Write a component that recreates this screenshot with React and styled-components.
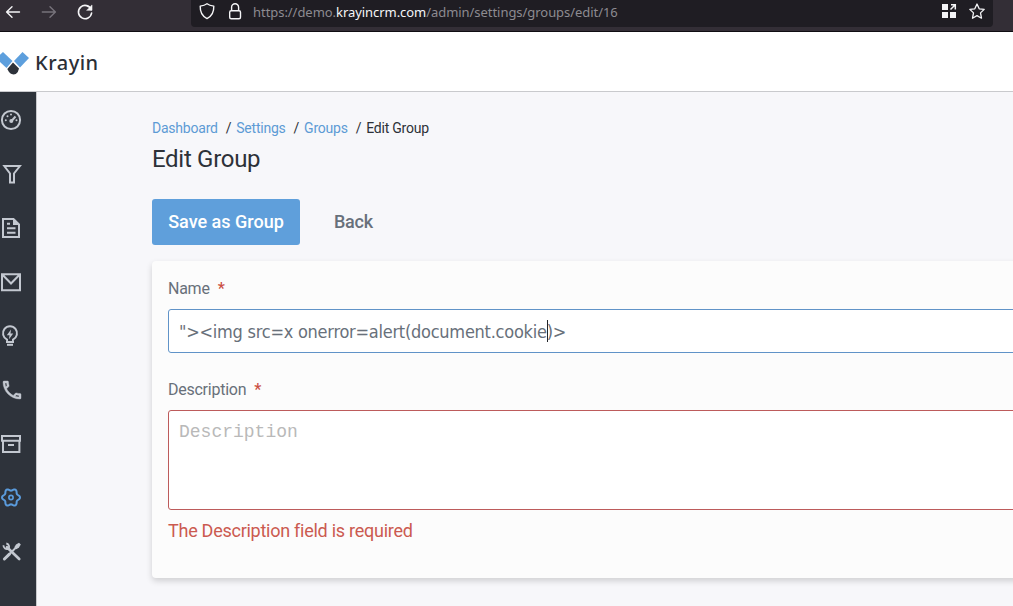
import React from "react";
import styled, { createGlobalStyle } from "styled-components";

const Global = createGlobalStyle`
  * { box-sizing: border-box; }
  html, body { margin: 0; height: 100%; overflow: hidden; }
  body { font-family: Roboto, "Liberation Sans", sans-serif; background: #f7f7fa; color: #2d3138; }
`;

const Page = styled.div`
  display: flex;
  flex-direction: column;
  width: 100%;
  height: 100vh;
  overflow: hidden;
`;

const BrowserBar = styled.div`
  display: flex;
  flex: none;
  height: 32px;
  background: #332e36;
  border-bottom: 1px solid #0f0d12;
`;

const NavButtons = styled.div`
  width: 191px;
  flex: none;
  svg { display: block; }
`;

const AddressBar = styled.div`
  display: flex;
  align-items: center;
  width: 802px;
  height: 27px;
  background: #1f1d23;
  border-radius: 0 0 4px 4px;
  svg { display: block; flex: none; }
`;

const Url = styled.div`
  flex: 1;
  height: 25px;
  line-height: 25px;
  margin-bottom: 2px;
  font-family: "Noto Sans", sans-serif;
  font-size: 13px;
  letter-spacing: -0.05px;
  white-space: nowrap;
  color: #8d8b91;
  b { font-weight: 400; color: #f6f6f8; }
`;

const Header = styled.header`
  display: flex;
  flex: none;
  align-items: center;
  height: 60px;
  background: #fff;
  border-bottom: 1px solid #c9cacd;
  svg { display: block; flex: none; }
`;

const Brand = styled.span`
  font-family: "Noto Sans", sans-serif;
  font-size: 20px;
  font-weight: 500;
  line-height: 28px;
  letter-spacing: 0.5px;
  margin-top: 2px;
  margin-left: 5px;
  color: #2b2f36;
`;

const Body = styled.div`
  display: flex;
  flex: 1;
  min-height: 0;
`;

const Sidebar = styled.nav`
  flex: none;
  width: 37px;
  padding-top: 1px;
  background: #2e333b;
  border-right: 1px solid #c9cacd;
`;

const MenuItem = styled.div`
  height: 54px;
  color: ${(p) => (p.$active ? "#5a9bdc" : "#c3c8d0")};
  svg { display: block; }
`;

const Content = styled.main`
  flex: 1;
  min-width: 0;
  padding: 27px 0 0 115px;
`;

const Crumbs = styled.div`
  display: flex;
  height: 18px;
  font-size: 14px;
  line-height: 18px;
  letter-spacing: -0.22px;
  white-space: pre;
`;

const Crumb = styled.span`
  color: ${(p) => (p.$current ? "#2d3138" : "#5d9bd5")};
`;

const Slash = styled.span`
  width: 18.5px;
  padding-left: 8px;
`;

const Title = styled.h1`
  margin: 8px 0 0;
  height: 28px;
  line-height: 28px;
  font-size: 24px;
  font-weight: 400;
  letter-spacing: -0.3px;
`;

const Actions = styled.div`
  display: flex;
  align-items: center;
  gap: 34px;
  margin-top: 26px;
`;

const SaveButton = styled.button`
  width: 148px;
  height: 46px;
  padding: 0 0 2px;
  border: 0;
  border-radius: 3px;
  background: #5f9fdb;
  color: #fff;
  font: 500 18px Roboto, sans-serif;
`;

const BackLink = styled.span`
  padding-bottom: 2px;
  font-size: 18px;
  font-weight: 500;
  letter-spacing: -0.25px;
  color: #68707a;
`;

const Card = styled.section`
  width: 1000px;
  height: 317px;
  margin-top: 16px;
  padding: 17px 16px 16px;
  background: #fcfcfc;
  border-radius: 4px;
  box-shadow: 0 3px 6px rgba(0, 0, 0, 0.16);
`;

const Label = styled.label`
  display: flex;
  gap: 8px;
  height: 22px;
  margin-bottom: 9px;
  line-height: 22px;
  font-size: 16px;
  letter-spacing: -0.25px;
  color: #68707a;
  i { font-style: normal; font-weight: 500; color: #cb4f44; }
`;

const field = (p) => `
  padding: 0 10px;
  background: #fff;
  border: 1px solid ${p.$invalid ? "#bd5b5b" : "#6093c8"};
  border-radius: 3px;
`;

const TextField = styled.div`
  ${field}
  display: flex;
  align-items: center;
  height: 44px;
  margin-bottom: 26px;
  font-family: "DejaVu Sans Condensed", "DejaVu Sans", sans-serif;
  font-stretch: condensed;
  font-size: 18px;
  letter-spacing: -0.25px;
  white-space: pre;
  color: #68707a;
`;

const Caret = styled.span`
  width: 1px;
  height: 22px;
  margin-right: -1px;
  background: #22252a;
`;

const TextArea = styled.div`
  ${field}
  height: 100px;
  padding-top: 10px;
  font-family: "Liberation Mono", monospace;
  font-size: 18px;
  line-height: 22px;
  color: #b9b9b9;
`;

const ErrorText = styled.div`
  margin-top: 10px;
  font-size: 18px;
  line-height: 22px;
  letter-spacing: -0.26px;
  color: #cb5a50;
`;

const gearPath =
  Array.from({ length: 72 }, (_, i) => {
    const a = (i * Math.PI) / 36;
    const r = 7.9 + 1.1 * Math.cos(6 * a);
    return `${i ? "L" : "M"}${(11 + r * Math.cos(a)).toFixed(2)} ${(26.5 + r * Math.sin(a)).toFixed(2)}`;
  }).join("") + "Z";

const icons = [
  <>
    <circle cx="11" cy="27" r="9.1" />
    <path d="M11.5 28L15.5 23.5" />
    <g fill="currentColor" stroke="none">
      <circle cx="11.3" cy="28" r="2" />
      <circle cx="5.8" cy="27.3" r="1" />
      <circle cx="7.5" cy="23.3" r="1" />
      <circle cx="11" cy="21.4" r="1" />
      <circle cx="16.5" cy="27.3" r="1" />
    </g>
  </>,
  <path d="M4.3 19H19.9L14 26.5V35.4H10V26.5Z" />,
  <>
    <path d="M3 18H13.5L19 23.5V36H3Z M7 22.8H10 M7 27.3H15.5 M7 31.7H15.5" />
    <path d="M13 18V24H19Z" fill="currentColor" stroke="none" />
  </>,
  <path d="M2 19.2H20V35.2H2Z M2.5 19.8L11 28.5L19.5 19.8" />,
  <>
    <path d="M7 33V30.6A7 7 0 1 1 13 30.6V33Z" />
    <path d="M7 35.8H13" />
    <path d="M11 20.5L6.8 26.2H9.5L9 30.2L13.2 24.6H10.5Z" fill="currentColor" stroke="none" />
  </>,
  <path
    transform="translate(0 15)"
    fill="currentColor"
    stroke="currentColor"
    strokeWidth="0.4"
    d="M6.54 5c.06.89.21 1.76.45 2.59l-1.2 1.2c-.41-1.2-.67-2.47-.76-3.79h1.51m9.86 12.02c.85.24 1.72.39 2.6.45v1.49c-1.32-.09-2.59-.35-3.8-.75l1.2-1.19M7.5 3H4c-.55 0-1 .45-1 1 0 9.39 7.61 17 17 17 .55 0 1-.45 1-1v-3.49c0-.55-.45-1-1-1-1.24 0-2.45-.2-3.57-.57-.1-.04-.21-.05-.31-.05-.26 0-.51.1-.71.29l-2.2 2.2c-2.83-1.45-5.15-3.76-6.59-6.59l2.2-2.2c.28-.28.36-.67.25-1.02C8.7 6.45 8.5 5.25 8.5 4c0-.55-.45-1-1-1z"
  />,
  <path d="M2 19H20V23.7H2Z M3 23.7V35H19.4V23.7 M8 28H14" />,
  <>
    <path d={gearPath} />
    <circle cx="11" cy="26.5" r="2.1" strokeWidth="1.7" />
  </>,
  <>
    <path d="M7 22.2L19.2 34" strokeWidth="2.7" strokeLinecap="round" />
    <path d="M3.6 20.2A3.2 3.2 0 0 0 8.6 23.4A3.2 3.2 0 0 0 6.3 18.5" strokeWidth="1.9" />
    <path d="M4.4 34L9.4 29.2" strokeWidth="3" strokeLinecap="round" />
    <path d="M9.6 29L16 22.5" strokeWidth="1.8" />
    <path d="M14.3 22.2L16 19.6L19 17.8L20.8 19.6L19 22.6L16.4 24.3Z" fill="currentColor" stroke="none" />
  </>,
];

export default function App() {
  return (
    <Page>
      <Global />
      <BrowserBar>
        <NavButtons>
          <svg width="191" height="31" fill="none" stroke="#f5f5f7" strokeWidth="1.4" strokeLinecap="round" strokeLinejoin="round">
            <path d="M19.5 12H6.7M12 6.7L6.6 12L12 17.3" />
            <path d="M42.3 12H55.3M50 6.7L55.4 12L50 17.3" stroke="#77737b" />
            <path d="M91.2 9.6A6.6 6.6 0 1 0 91.6 13" strokeWidth="1.6" />
            <path d="M92 5.3V10.3H87Z" fill="#f5f5f7" strokeWidth="0.6" />
          </svg>
        </NavButtons>
        <AddressBar>
          <svg width="62" height="27" fill="none" stroke="#f5f5f7" strokeWidth="1.4" strokeLinejoin="round">
            <path d="M16 3.7C18 5.2 20 5.7 22.8 6.1C23 12 21 16.3 16 18.6C11 16.3 9 12 9.2 6.1C12 5.7 14 5.2 16 3.7Z" />
            <rect x="38.7" y="10.7" width="10.8" height="8" rx="1.5" />
            <path d="M40.6 10.7V7.3A3.5 3.5 0 0 1 47.6 7.3V10.7" />
          </svg>
          <Url>
            https://demo.<b>krayincrm.com</b>/admin/settings/groups/edit/16
          </Url>
          <svg width="60" height="27" fill="#f5f5f7">
            <path d="M9 4H15V10H9Z M9 12H15V18H9Z M17 12H23V18H17Z" />
            <path d="M17.5 9.5L22 5M18 4.7H22.3V9.4" fill="none" stroke="#f5f5f7" strokeWidth="1.5" />
            <path d="M44 4L46.2 8.8L51.2 9.4L47.5 12.9L48.5 18.2L44 15.6L39.5 18.2L40.5 12.9L36.8 9.4L41.8 8.8Z" fill="none" stroke="#f5f5f7" strokeWidth="1.3" strokeLinejoin="round" />
          </svg>
        </AddressBar>
      </BrowserBar>
      <Header>
        <svg width="30" height="60">
          <path d="M-4 26.5L3 20L12.5 29L6.5 36Z" fill="#5d9fdd" />
          <path d="M22.5 20L29 26L20 35.5L14 29Z" fill="#5d9fdd" />
          <path d="M13 30.5L19 36.5L17.8 40Q16 42.5 13.5 42.5Q10.5 42.3 9 40L7.3 37Z" fill="#2d323a" />
        </svg>
        <Brand>Krayin</Brand>
      </Header>
      <Body>
        <Sidebar>
          {icons.map((icon, i) => (
            <MenuItem key={i} $active={i === 7}>
              <svg width="36" height="54" fill="none" stroke="currentColor" strokeWidth="2">{icon}</svg>
            </MenuItem>
          ))}
        </Sidebar>
        <Content>
          <Crumbs>
            <Crumb>Dashboard</Crumb>
            <Slash>/</Slash>
            <Crumb>Settings</Crumb>
            <Slash>/</Slash>
            <Crumb>Groups</Crumb>
            <Slash>/</Slash>
            <Crumb $current>Edit Group</Crumb>
          </Crumbs>
          <Title>Edit Group</Title>
          <Actions>
            <SaveButton>Save as Group</SaveButton>
            <BackLink>Back</BackLink>
          </Actions>
          <Card>
            <Label>Name<i>*</i></Label>
            <TextField>
              <span>{'"><img src=x onerror=alert(document.cookie'}</span>
              <Caret />
              <span>{")>"}</span>
            </TextField>
            <Label>Description<i>*</i></Label>
            <TextArea $invalid>Description</TextArea>
            <ErrorText>The Description field is required</ErrorText>
          </Card>
        </Content>
      </Body>
    </Page>
  );
}
